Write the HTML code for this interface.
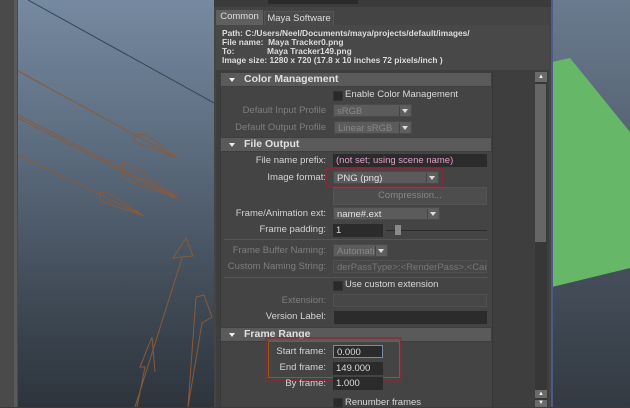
<!DOCTYPE html>
<html><head><style>
*{margin:0;padding:0;box-sizing:border-box}
body{width:630px;height:407px;overflow:hidden;position:relative;background:#3a3a3a;font-family:"Liberation Sans",sans-serif;font-size:9.5px;color:#d8d8d8}
.a{position:absolute}
.lbl{position:absolute;right:304px;text-align:right;white-space:nowrap;font-size:9.5px;color:#d4d4d4}
.dis{color:#7e7e7e}
.fld{position:absolute;background:#2b2b2b;height:13px;padding-left:3px;line-height:13px;font-size:9.5px;color:#ddd;white-space:nowrap;overflow:hidden}
.dd{position:absolute;background:#5b5b5b;height:13px;padding-left:3px;line-height:13px;font-size:9.5px;color:#e4e4e4;border:1px solid #4a4a4a}
.dd:after{content:"";position:absolute;right:2px;top:1px;width:9px;height:10px;border-left:1px solid #444;background:#5f5f5f}
.dd i{position:absolute;right:3px;top:4px;width:0;height:0;border-left:3px solid transparent;border-right:3px solid transparent;border-top:4px solid #ddd;z-index:2}
.hdr{position:absolute;left:220px;width:272px;height:15px;background:#5a5a5a;border:1px solid #3e3e3e;font-weight:bold;font-size:10.5px;color:#e0e0e0;line-height:13px;padding-left:23px}
.hdr:before{content:"";position:absolute;left:8px;top:5px;border-left:3px solid transparent;border-right:3px solid transparent;border-top:4px solid #eee}
.cb{position:absolute;width:10px;height:10px;background:#2a2a2a;border:1px solid #333}
</style></head><body>
<div class="a" style="left:0;top:0;width:18px;height:407px;background:#4a4a4a"></div>
<div class="a" style="left:14px;top:0;width:3px;height:407px;background:#5a5a5a"></div>
<div class="a" style="left:18px;top:0;width:196px;height:407px;background:linear-gradient(#7589a0 0%,#5d6d80 35%,#424d59 70%,#2d343c 100%)"></div>
<svg class="a" style="left:0;top:0" width="214" height="407" fill="none">
<line x1="28" y1="0" x2="214" y2="103" stroke="#2b4a50" stroke-width="1"/>
<g stroke="#8a5a3a" stroke-width="1">
<line x1="18" y1="71" x2="177" y2="158"/><path d="M136 135l10 -1 31 24 -44 -17z"/>
<line x1="18" y1="115" x2="177" y2="197"/><line x1="18" y1="118" x2="177" y2="199"/><path d="M123 162l12 6 42 29 -45 -14 -10 -6z"/>
<line x1="18" y1="155" x2="144" y2="216"/><path d="M100 192l10 2 34 22 -44 -15z"/>
<line x1="135" y1="407" x2="182" y2="258"/><path d="M173 258l13 -20 7 18z"/>
<path d="M188 407l8 -110 8 -2 8 22 -10 6z"/><path d="M137 407l8 -40 -5 0 12 -30 3 35"/>
</g>
</svg>
<div class="a" style="left:552px;top:0;width:78px;height:407px;background:linear-gradient(#6a7b8f 0%,#4d5866 50%,#333a42 100%)"></div>
<div class="a" style="left:552px;top:0;width:78px;height:407px;background:#66b868;clip-path:polygon(0 62px,18px 58px,78px 132px,78px 268px,0 287px)"></div>
<div class="a" style="left:550px;top:0;width:3px;height:407px;background:#4c5a8a"></div>
<div class="a" style="left:214px;top:0;width:337px;height:407px;background:#444"></div>
<div class="a" style="left:214px;top:0;width:337px;height:7px;background:#3b3b3b"></div>
<div class="a" style="left:268px;top:0;width:90px;height:4px;background:#2a2a2a"></div>
<div class="a" style="left:216px;top:10px;width:47px;height:15px;background:#5f5f5f;color:#ddd;font-size:9.5px;text-align:center;line-height:14px">Common</div>
<div class="a" style="left:264px;top:11px;width:70px;height:14px;background:#4a4a4a;border:1px solid #555;border-bottom:none;color:#ddd;font-size:9.5px;text-align:center;line-height:13px">Maya Software</div>
<div class="a" style="left:216px;top:25px;width:333px;height:45px;background:#484848"></div>
<div class="a" style="left:222px;top:29px;font-weight:bold;font-size:8.4px;line-height:9px;color:#ddd;white-space:pre">Path: C:/Users/Neel/Documents/maya/projects/default/images/
File name:  Maya Tracker0.png
To:              Maya Tracker149.png
Image size: 1280 x 720 (17.8 x 10 inches 72 pixels/inch )</div>
<div class="a" style="left:216px;top:70px;width:333px;height:337px;background:#3e3e3e"></div>
<div class="a" style="left:220px;top:72px;width:273px;height:335px;background:#444;border-left:1px solid #383838;border-right:1px solid #383838"></div>
<div class="a" style="left:535px;top:72px;width:12px;height:335px;background:#373737"></div>
<div class="a" style="left:535px;top:72px;width:12px;height:10px;background:#6a6a6a;font-size:6px;text-align:center;color:#eee;line-height:10px">▲</div>
<div class="a" style="left:535px;top:84px;width:11px;height:158px;background:#666"></div>
<div class="a" style="left:535px;top:390px;width:12px;height:8px;background:#6a6a6a;font-size:6px;text-align:center;color:#eee;line-height:8px">▲</div>
<div class="a" style="left:535px;top:400px;width:12px;height:7px;background:#6a6a6a;font-size:6px;text-align:center;color:#eee;line-height:7px">▼</div>

<div class="hdr" style="top:72px">Color Management</div>
<div class="cb" style="left:333px;top:91px"></div><div class="a" style="left:345px;top:89px">Enable Color Management</div>
<div class="lbl dis" style="top:105px">Default Input Profile</div>
<div class="dd" style="left:333px;top:104px;width:79px;color:#888">sRGB<i></i></div>
<div class="lbl dis" style="top:122px">Default Output Profile</div>
<div class="dd" style="left:334px;top:121px;width:78px;color:#888">Linear sRGB<i></i></div>

<div class="hdr" style="top:137px">File Output</div>
<div class="lbl" style="top:155px">File name prefix:</div>
<div class="fld" style="left:333px;top:154px;width:154px;color:#e0a0c8">(not set; using scene name)</div>
<div class="lbl" style="top:172px">Image format:</div>
<div class="dd" style="left:333px;top:171px;width:106px">PNG (png)<i></i></div>
<div class="a" style="left:325px;top:168px;width:118px;height:20px;border:2px solid #8a2838;opacity:.85"></div>
<div class="a" style="left:333px;top:187px;width:154px;height:18px;background:#4d4d4d;border:1px solid #555;color:#888;text-align:center;line-height:16px">Compression...</div>
<div class="lbl" style="top:208px">Frame/Animation ext:</div>
<div class="dd" style="left:333px;top:207px;width:107px">name#.ext<i></i></div>
<div class="lbl" style="top:224px">Frame padding:</div>
<div class="fld" style="left:333px;top:224px;width:50px">1</div>
<div class="a" style="left:386px;top:230px;width:101px;height:1px;background:#2a2a2a"></div>
<div class="a" style="left:395px;top:225px;width:6px;height:10px;background:#8a8a8a"></div>
<div class="a" style="left:224px;top:239px;width:264px;height:1px;background:#555"></div>
<div class="lbl dis" style="top:245px">Frame Buffer Naming:</div>
<div class="dd" style="left:333px;top:244px;width:55px;color:#888">Automatic<i></i></div>
<div class="lbl dis" style="top:261px">Custom Naming String:</div>
<div class="fld" style="left:333px;top:260px;width:154px;background:#474747;border:1px solid #505050;color:#777">derPassType>:&lt;RenderPass>.&lt;Camera></div>
<div class="a" style="left:224px;top:277px;width:264px;height:1px;background:#555"></div>
<div class="cb" style="left:333px;top:281px"></div><div class="a" style="left:345px;top:279px">Use custom extension</div>
<div class="lbl dis" style="top:295px">Extension:</div>
<div class="fld" style="left:333px;top:294px;width:154px;background:#474747;border:1px solid #505050"></div>
<div class="lbl" style="top:311px">Version Label:</div>
<div class="fld" style="left:334px;top:311px;width:153px"></div>

<div class="hdr" style="top:327px">Frame Range</div>
<div class="a" style="left:265px;top:337px;width:137px;height:45px;border:2px solid #8a2838;opacity:.7"></div>
<div class="a" style="left:268px;top:341px;width:132px;height:37px;border:1px solid #8a5a20"></div>
<div class="lbl" style="top:346px">Start frame:</div>
<div class="fld" style="left:333px;top:345px;width:50px;border:1px solid #7a8aa8">0.000</div>
<div class="lbl" style="top:362px">End frame:</div>
<div class="fld" style="left:333px;top:362px;width:50px">149.000</div>
<div class="lbl" style="top:378px">By frame:</div>
<div class="fld" style="left:333px;top:377px;width:50px">1.000</div>
<div class="cb" style="left:333px;top:398px"></div><div class="a" style="left:345px;top:397px">Renumber frames</div>
</body></html>
